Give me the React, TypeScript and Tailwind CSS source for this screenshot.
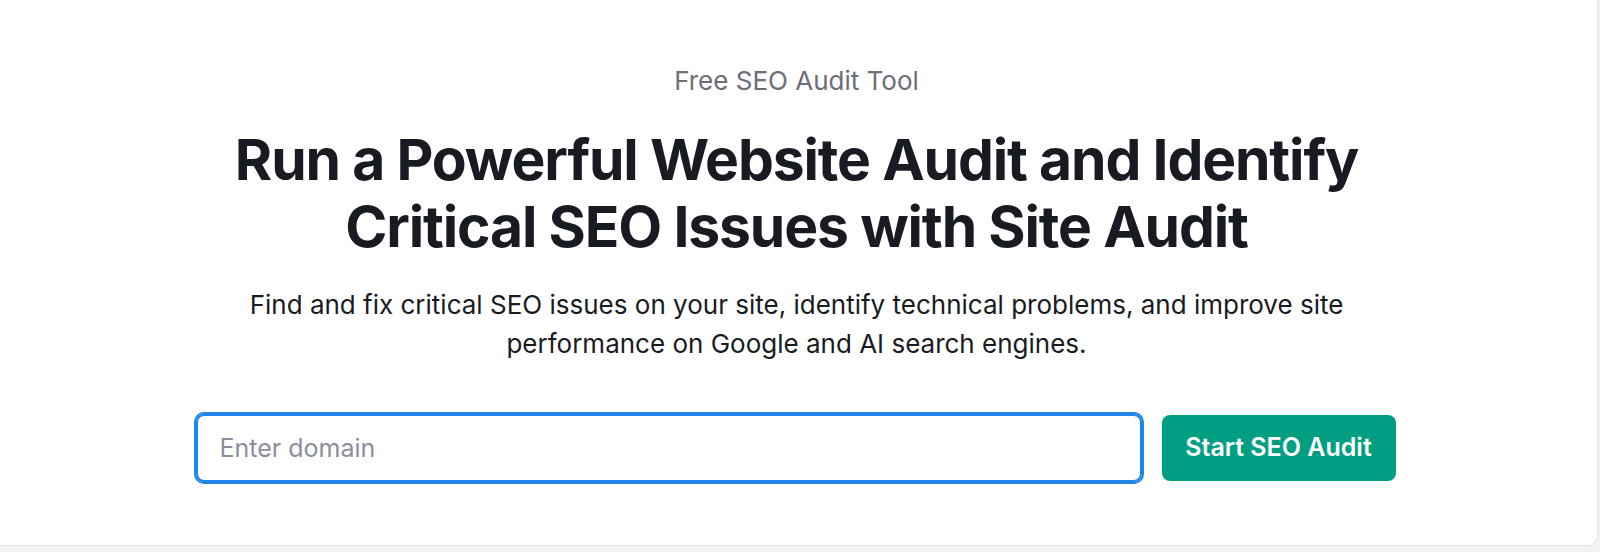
import { useEffect, useRef } from "react";

const font = { fontFamily: "Inter, 'Noto Sans', sans-serif" };

export default function App() {
  const inputRef = useRef<HTMLInputElement>(null);

  useEffect(() => {
    inputRef.current?.focus();
  }, []);

  return (
    <div className="min-h-screen bg-[#f2f2f4]" style={font}>
      <div className="mr-[2px] h-[546px] rounded-br-[10px] border-b border-r border-[#e0e1e6] bg-white">
        <div className="flex flex-col items-center pr-[4px] pt-[65px] text-center">
          <p className="text-[26px] leading-[32px] text-[#6c6e79]">Free SEO Audit Tool</p>

          <h1 className="mt-[29px] max-w-[1200px] text-[57px] font-bold leading-[67px] tracking-[-0.02em] text-[#191b23]">
            Run a Powerful Website Audit and Identify Critical SEO Issues with Site Audit
          </h1>

          <p className="mt-[25px] max-w-[1150px] text-[26px] leading-[39px] text-[#191b23]">
            Find and fix critical SEO issues on your site, identify technical problems, and improve site
            performance on Google and AI search engines.
          </p>

          <form
            className="mr-[4px] mt-[49px] flex items-center gap-[18px]"
            onSubmit={(e) => e.preventDefault()}
          >
            <input
              ref={inputRef}
              type="text"
              placeholder="Enter domain"
              className="h-[72px] w-[950px] rounded-[10px] border-[2px] border-[#1d86e6] px-[24px] text-[25px] text-[#191b23] caret-[#191b23] outline-none ring-[2px] ring-[#1d86e6] ring-inset placeholder:text-[#8b8e9b]"
            />
            <button
              type="submit"
              className="h-[66px] w-[234px] rounded-[8px] bg-[#009f81] text-[25px] font-semibold text-white"
            >
              Start SEO Audit
            </button>
          </form>
        </div>
      </div>
    </div>
  );
}
